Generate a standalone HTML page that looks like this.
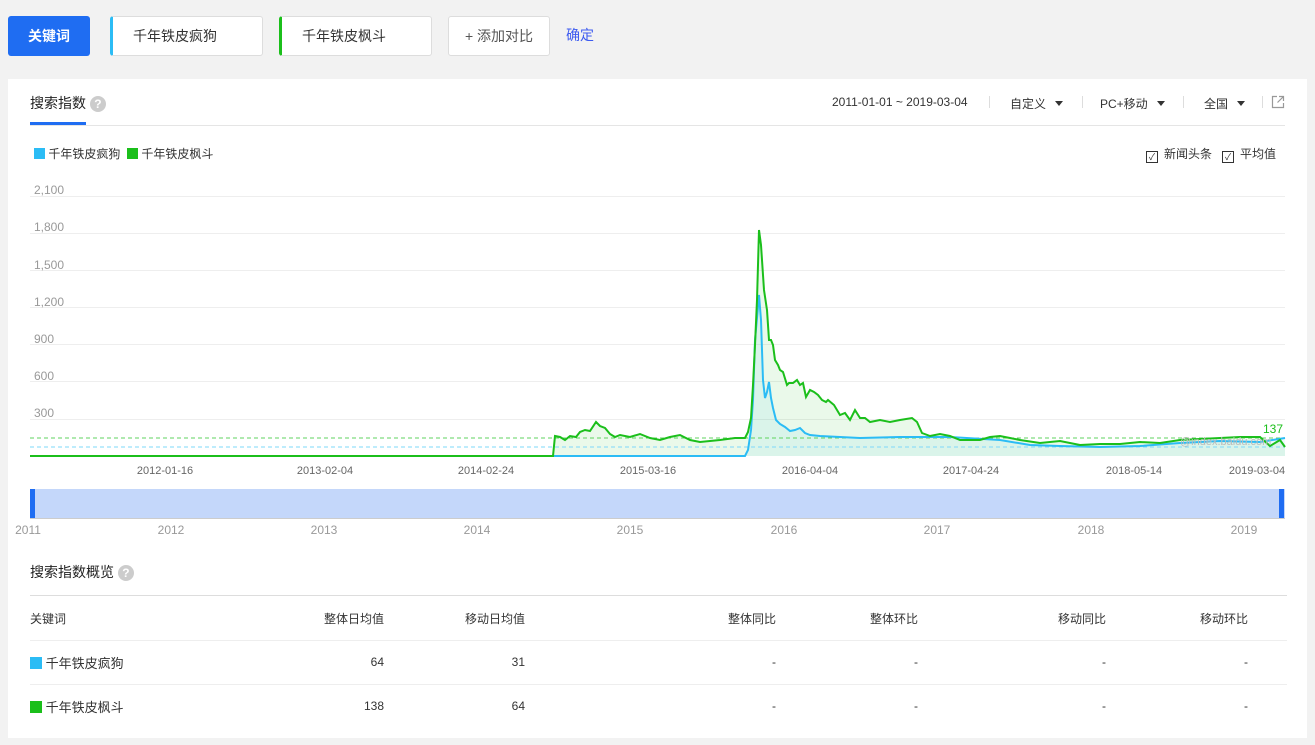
<!DOCTYPE html>
<html><head><meta charset="utf-8"><style>
*{margin:0;padding:0;box-sizing:border-box}
body{width:1315px;height:745px;background:#f2f2f2;font-family:"Liberation Sans","Noto Sans CJK SC",sans-serif;position:relative;overflow:hidden;color:#333}
.a{position:absolute}
.btn{position:absolute;top:16px;height:40px;background:#fff;border:1px solid #ddd;border-radius:3px;font-size:14px;line-height:38px}
.q{display:inline-block;width:16px;height:16px;border-radius:50%;background:#ccc;color:#fff;font-size:12px;text-align:center;line-height:16px;font-weight:bold;vertical-align:middle}
.sm{font-size:12px;color:#333}
.th{font-size:12px;color:#333;position:absolute;top:610px}
.td{font-size:12px;color:#333;position:absolute}
.r{text-align:right;width:120px}
.cb{display:inline-block;width:12px;height:12px;border:1px solid #333;vertical-align:-2px;margin-right:6px;font-size:9px;line-height:10px;text-align:center}
.tri{display:inline-block;width:0;height:0;border-left:4px solid transparent;border-right:4px solid transparent;border-top:5px solid #333;vertical-align:2px}
.sep{position:absolute;top:96px;width:1px;height:12px;background:#ddd}
</style></head><body>
<div class="a" style="left:8px;top:16px;width:82px;height:40px;background:#1f6df2;border-radius:3px;color:#fff;font-size:14px;font-weight:bold;text-align:center;line-height:40px">关键词</div>
<div class="btn" style="left:110px;width:153px;border-left:3px solid #2bbcf5;padding-left:20px">千年铁皮疯狗</div>
<div class="btn" style="left:279px;width:153px;border-left:3px solid #1bbf1b;padding-left:20px">千年铁皮枫斗</div>
<div class="btn" style="left:448px;width:102px;text-align:center;color:#555">+ 添加对比</div>
<div class="a" style="left:566px;top:25px;font-size:14px;color:#3d5bf0">确定</div>

<div class="a" style="left:8px;top:79px;width:1299px;height:659px;background:#fff"></div>
<div class="a" style="left:30px;top:93px;font-size:14px;color:#222">搜索指数 <span class="q">?</span></div>
<div class="a" style="left:30px;top:122px;width:56px;height:3px;background:#1f6df2"></div>
<div class="a" style="left:30px;top:125px;width:1255px;height:1px;background:#e5e5e5"></div>
<div class="a sm" style="left:832px;top:95px">2011-01-01 ~ 2019-03-04</div>
<div class="sep" style="left:989px"></div>
<div class="a sm" style="left:1010px;top:95px">自定义 <span class="tri" style="margin-left:6px"></span></div>
<div class="sep" style="left:1082px"></div>
<div class="a sm" style="left:1100px;top:95px">PC+移动 <span class="tri" style="margin-left:6px"></span></div>
<div class="sep" style="left:1183px"></div>
<div class="a sm" style="left:1204px;top:95px">全国 <span class="tri" style="margin-left:6px"></span></div>
<div class="sep" style="left:1262px"></div>
<svg class="a" style="left:1271px;top:95px" width="14" height="14"><path d="M6 1.5H1.5v11h11V8" fill="none" stroke="#999" stroke-width="1.2"/><path d="M8 1.5h4.5V6M12.5 1.5L6.5 7.5" fill="none" stroke="#999" stroke-width="1.2"/></svg>
<div class="a sm" style="left:34px;top:145px"><span style="display:inline-block;width:11px;height:11px;background:#2bbcf5;vertical-align:-1px"></span> 千年铁皮疯狗 &nbsp;<span style="display:inline-block;width:11px;height:11px;background:#1bbf1b;vertical-align:-1px"></span> 千年铁皮枫斗</div>
<div class="a sm" style="left:1146px;top:145px"><span class="cb">✓</span>新闻头条 &nbsp;&nbsp;<span class="cb">✓</span>平均值</div>

<svg class="a" style="left:0;top:0" width="1315" height="560">
<g stroke="#eee" stroke-width="1">
<line x1="30" x2="1285" y1="196.5" y2="196.5"/><line x1="30" x2="1285" y1="233.5" y2="233.5"/><line x1="30" x2="1285" y1="270.5" y2="270.5"/><line x1="30" x2="1285" y1="307.5" y2="307.5"/><line x1="30" x2="1285" y1="344.5" y2="344.5"/><line x1="30" x2="1285" y1="381.5" y2="381.5"/><line x1="30" x2="1285" y1="419.5" y2="419.5"/>
</g>
<g fill="#999" font-size="12" font-family="Liberation Sans,sans-serif">
<text x="34" y="194">2,100</text><text x="34" y="231">1,800</text><text x="34" y="269">1,500</text><text x="34" y="306">1,200</text><text x="34" y="343">900</text><text x="34" y="380">600</text><text x="34" y="417">300</text>
</g>
<g fill="#666" font-size="11" font-family="Liberation Sans,sans-serif" text-anchor="middle">
<text x="165" y="474">2012-01-16</text><text x="325" y="474">2013-02-04</text><text x="486" y="474">2014-02-24</text><text x="648" y="474">2015-03-16</text><text x="810" y="474">2016-04-04</text><text x="971" y="474">2017-04-24</text><text x="1134" y="474">2018-05-14</text><text x="1257" y="474">2019-03-04</text>
</g>
<polygon fill="#1bbf1b" fill-opacity="0.09" points="553,456 555,436 560,437 565,440 570,436 576,437 580,432 585,430 590,431 596,422 600,426 605,428 610,434 615,437 620,435 630,437 640,434 650,438 660,440 670,437 680,435 690,440 700,442 720,440 735,438 745,438 748,432 751,418 753,385 755,345 757,300 759,230 761,245 764,290 767,310 769,340 771,340 773,345 775,360 778,365 780,370 783,372 787,385 789,383 793,383 797,380 800,385 803,383 806,397 810,390 814,392 818,395 822,400 826,402 828,400 834,405 840,415 845,413 850,420 855,410 860,418 865,418 870,422 880,420 890,422 900,420 912,418 917,422 922,433 930,436 940,434 950,436 960,440 980,440 990,437 1000,436 1010,438 1020,440 1040,443 1060,441 1080,445 1100,444 1120,444 1140,442 1160,443 1180,440 1200,439 1220,438 1240,437 1260,437 1270,446 1280,440 1285,447 1285,456"/>
<polygon fill="#2bbcf5" fill-opacity="0.08" points="745,456 748,450 751,430 753,400 755,340 757,318 759,295 761,320 763,380 765,398 767,392 769,382 771,398 773,408 776,420 780,424 785,427 790,431 795,430 800,428 805,433 810,435 820,436 840,437 860,438 900,437 950,437 1000,440 1030,445 1060,446 1100,447 1140,446 1180,443 1220,441 1260,442 1285,438 1285,456"/>
<line x1="30" x2="1285" y1="438" y2="438" stroke="#5fd35f" stroke-dasharray="4,3"/>
<line x1="30" x2="1285" y1="447" y2="447" stroke="#7dd8fa" stroke-dasharray="4,3"/>
<polyline fill="none" stroke="#2bbcf5" stroke-width="2" points="30,456 745,456 748,450 751,430 753,400 755,340 757,318 759,295 761,320 763,380 765,398 767,392 769,382 771,398 773,408 776,420 780,424 785,427 790,431 795,430 800,428 805,433 810,435 820,436 840,437 860,438 900,437 950,437 1000,440 1030,445 1060,446 1100,447 1140,446 1180,443 1220,441 1260,442 1285,438"/>
<polyline fill="none" stroke="#1bbf1b" stroke-width="2" points="30,456 553,456 555,436 560,437 565,440 570,436 576,437 580,432 585,430 590,431 596,422 600,426 605,428 610,434 615,437 620,435 630,437 640,434 650,438 660,440 670,437 680,435 690,440 700,442 720,440 735,438 745,438 748,432 751,418 753,385 755,345 757,300 759,230 761,245 764,290 767,310 769,340 771,340 773,345 775,360 778,365 780,370 783,372 787,385 789,383 793,383 797,380 800,385 803,383 806,397 810,390 814,392 818,395 822,400 826,402 828,400 834,405 840,415 845,413 850,420 855,410 860,418 865,418 870,422 880,420 890,422 900,420 912,418 917,422 922,433 930,436 940,434 950,436 960,440 980,440 990,437 1000,436 1010,438 1020,440 1040,443 1060,441 1080,445 1100,444 1120,444 1140,442 1160,443 1180,440 1200,439 1220,438 1240,437 1260,437 1270,446 1280,440 1285,447"/>
<text x="1283" y="433" fill="#1bbf1b" font-size="12" text-anchor="end" font-family="Liberation Sans,sans-serif">137</text>
<text x="1180" y="445" fill="#bbb" font-size="11" font-family="Liberation Sans,sans-serif">@index.baidu.com</text>
<rect x="30" y="489" width="1255" height="29" fill="#c4d7fa"/>
<line x1="30" x2="1285" y1="518.5" y2="518.5" stroke="#ccc"/>
<rect x="30" y="489" width="5" height="29" fill="#1f6df2"/>
<rect x="1279" y="489" width="5" height="29" fill="#1f6df2"/>
<g fill="#999" font-size="12" font-family="Liberation Sans,sans-serif" text-anchor="middle">
<text x="28" y="534">2011</text><text x="171" y="534">2012</text><text x="324" y="534">2013</text><text x="477" y="534">2014</text><text x="630" y="534">2015</text><text x="784" y="534">2016</text><text x="937" y="534">2017</text><text x="1091" y="534">2018</text><text x="1244" y="534">2019</text>
</g>
</svg>

<div class="a" style="left:30px;top:562px;font-size:14px;color:#222">搜索指数概览 <span class="q">?</span></div>
<div class="a" style="left:30px;top:595px;width:1257px;height:1px;background:#ddd"></div>
<div class="a" style="left:30px;top:640px;width:1257px;height:1px;background:#eee"></div>
<div class="a" style="left:30px;top:684px;width:1257px;height:1px;background:#eee"></div>
<div class="th" style="left:30px">关键词</div>
<div class="th r" style="left:264px">整体日均值</div>
<div class="th r" style="left:405px">移动日均值</div>
<div class="th r" style="left:656px">整体同比</div>
<div class="th r" style="left:798px">整体环比</div>
<div class="th r" style="left:986px">移动同比</div>
<div class="th r" style="left:1128px">移动环比</div>
<div class="td" style="left:30px;top:653px;font-size:13px"><span style="display:inline-block;width:12px;height:12px;background:#2bbcf5;vertical-align:-1px"></span> 千年铁皮疯狗</div>
<div class="td" style="left:30px;top:697px;font-size:13px"><span style="display:inline-block;width:12px;height:12px;background:#1bbf1b;vertical-align:-1px"></span> 千年铁皮枫斗</div>
<div class="td r" style="left:264px;top:655px">64</div><div class="td r" style="left:405px;top:655px">31</div>
<div class="td r" style="left:656px;top:655px">-</div><div class="td r" style="left:798px;top:655px">-</div><div class="td r" style="left:986px;top:655px">-</div><div class="td r" style="left:1128px;top:655px">-</div>
<div class="td r" style="left:264px;top:699px">138</div><div class="td r" style="left:405px;top:699px">64</div>
<div class="td r" style="left:656px;top:699px">-</div><div class="td r" style="left:798px;top:699px">-</div><div class="td r" style="left:986px;top:699px">-</div><div class="td r" style="left:1128px;top:699px">-</div>
</body></html>
